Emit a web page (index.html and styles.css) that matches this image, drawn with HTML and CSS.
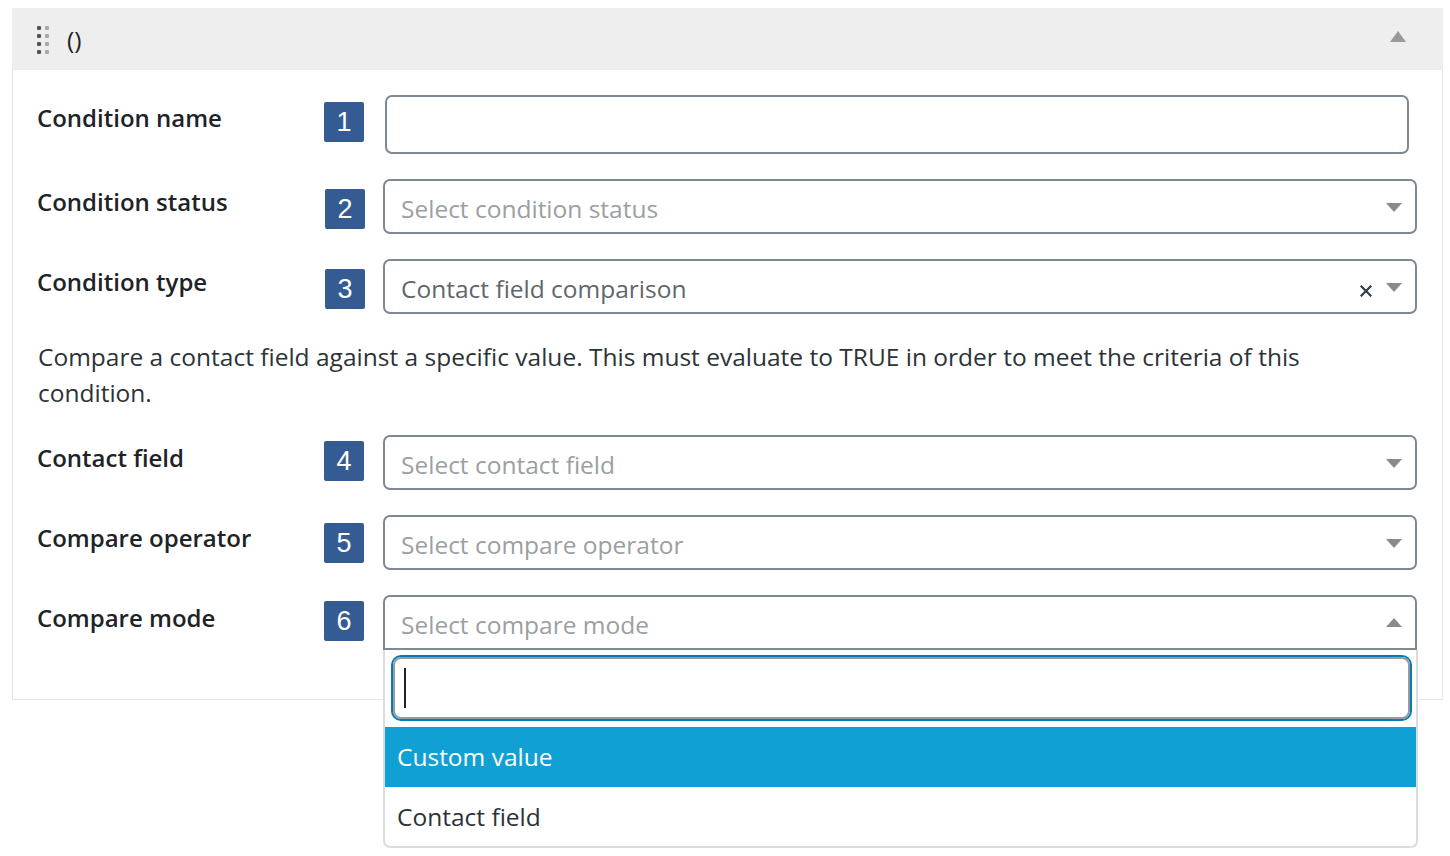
FILE: index.html
```html
<!DOCTYPE html>
<html>
<head>
<meta charset="utf-8">
<link rel="stylesheet" href="styles.css">
</head>
<body>
<div class="panel">
  <div class="panel-head">
    <div class="handle">
      <span class="d dk"></span><span class="d lt"></span>
      <span class="d dk"></span><span class="d lt"></span>
      <span class="d dk"></span><span class="d lt"></span>
      <span class="d dk"></span><span class="d lt"></span>
    </div>
    <span class="head-title">()</span>
    <span class="head-toggle"></span>
  </div>
  <div class="panel-body">
    <div class="row">
      <div class="label">Condition name</div>
      <div class="badge b1">1</div>
      <div class="text-input"></div>
    </div>
    <div class="row">
      <div class="label">Condition status</div>
      <div class="badge">2</div>
      <div class="select"><span class="ph">Select condition status</span><span class="arrow"></span></div>
    </div>
    <div class="row">
      <div class="label">Condition type</div>
      <div class="badge">3</div>
      <div class="select"><span class="val">Contact field comparison</span><svg class="clear" width="12" height="12" viewBox="0 0 12 12"><path d="M1.5 1.5 L10.5 10.5 M10.5 1.5 L1.5 10.5" stroke="#2f3d4c" stroke-width="2.2" stroke-linecap="square"/></svg><span class="arrow"></span></div>
    </div>
    <p class="desc">Compare a contact field against a specific value. This must evaluate to TRUE in order to meet the criteria of this condition.</p>
    <div class="row">
      <div class="label">Contact field</div>
      <div class="badge b4">4</div>
      <div class="select"><span class="ph">Select contact field</span><span class="arrow"></span></div>
    </div>
    <div class="row">
      <div class="label">Compare operator</div>
      <div class="badge b5">5</div>
      <div class="select"><span class="ph">Select compare operator</span><span class="arrow"></span></div>
    </div>
    <div class="row">
      <div class="label">Compare mode</div>
      <div class="badge b4">6</div>
      <div class="select-wrap">
        <div class="select open"><span class="ph">Select compare mode</span><span class="arrow up"></span></div>
        <div class="dropdown">
          <div class="search"><span class="caret"></span></div>
          <div class="opt hl">Custom value</div>
          <div class="opt">Contact field</div>
        </div>
      </div>
    </div>
  </div>
</div>
</body>
</html>
```
FILE: styles.css
```css
* { box-sizing: border-box; }
html, body { min-height: 856px; }
body {
  margin: 0;
  background: #fff;
  font-family: "Open Sans", "Noto Sans", sans-serif;
  color: #1d2327;
}
.panel {
  margin: 8px 0 0 12px;
  width: 1431px;
  border: 1px solid #e6e6e6;
  background: #fff;
}
.panel-head {
  height: 62px;
  background: #eeeeee;
  display: flex;
  align-items: center;
  padding: 0 0 0 25px;
  margin: -1px -1px 0 -1px;
}
.handle {
  display: grid;
  grid-template-columns: 4px 4px;
  column-gap: 4px;
  row-gap: 4px;
  width: 12px;
  margin-top: 2px;
}
.d { width: 4px; height: 4px; border-radius: 1px; }
.dk { background: #555; }
.lt { background: #aaa; }
.head-title {
  margin-left: 18px;
  font-size: 24.5px;
  color: #1d2327;
  margin-top: 1px;
}
.head-toggle {
  margin-left: auto;
  margin-right: 37px;
  width: 0; height: 0;
  border-left: 8px solid transparent;
  border-right: 8px solid transparent;
  border-bottom: 11px solid #999;
  margin-top: -6px;
}
.panel-body {
  padding: 25px 25px 49px 24px;
}
.row {
  display: grid;
  grid-template-columns: 287px 40px 1fr;
  align-items: start;
  margin-bottom: 25px;
}
.row:last-child { margin-bottom: 0; }
.label {
  font-size: 24px;
  font-weight: 600;
  line-height: 44px;
  color: #1d2327;
  margin-top: 1px;
}
.badge {
  margin-top: 10px;
  width: 40px; height: 40px;
  background: #345c93;
  color: #fff;
  border-radius: 2px;
  font-family: "Liberation Sans", Arial, sans-serif;
  font-size: 27px;
  display: flex;
  align-items: center;
  justify-content: center;
  margin-left: 1px;
}
.b1 { margin-top: 7px; margin-left: 0; }
.b4 { margin-top: 6px; margin-left: 0; }
.b5 { margin-top: 8px; margin-left: 0; }
.text-input {
  height: 59px;
  margin-left: 21px;
  margin-right: 8px;
  border: 2px solid #7e8993;
  border-radius: 7px;
}
.select {
  margin-left: 19px;
  height: 55px;
  border: 2px solid #7e8993;
  border-radius: 7px;
  display: flex;
  align-items: center;
  padding: 0 0 0 16px;
  font-size: 24.5px;
  position: relative;
}
.select-wrap .select { margin-left: 0; }
.select-wrap { position: relative; margin-left: 19px; }
.ph { color: #9a9fa4; margin-top: 4px; }
.val { color: #5f666d; margin-top: 4px; }
.arrow {
  position: absolute;
  right: 13px;
  top: 22px;
  width: 0; height: 0;
  border-left: 8px solid transparent;
  border-right: 8px solid transparent;
  border-top: 9px solid #8a8a8a;
}
.arrow.up {
  border-top: 0;
  border-bottom: 9px solid #8a8a8a;
  top: 21px;
}
.clear {
  position: absolute;
  right: 43px;
  top: 24px;
}
.select.open {
  border-bottom-left-radius: 0;
  border-bottom-right-radius: 0;
}
.dropdown {
  position: absolute;
  left: 0;
  right: -1px;
  top: 55px;
  height: 198px;
  border: 2px solid #dcdcdc;
  border-top: 0;
  border-radius: 0 0 7px 7px;
  background: #fff;
  padding-top: 7px;
}
.search {
  margin: 0 6px 0 8px;
  height: 62px;
  border: 2px solid #9a9a9a;
  border-radius: 8px;
  box-shadow: 0 0 0 2px #007cba;
  position: relative;
}
.caret {
  position: absolute;
  left: 9px;
  top: 9px;
  width: 2px;
  height: 40px;
  background: #222;
}
.opt {
  height: 60px;
  line-height: 60px;
  padding-left: 12px;
  font-size: 24.5px;
  color: #2c3338;
}
.opt.hl {
  margin-top: 8px;
  background: #11a0d3;
  color: #fff;
}
.desc {
  margin: 0 0 24px 1px;
  font-size: 24.5px;
  line-height: 36px;
  color: #2c3338;
  padding-right: 20px;
}
```
